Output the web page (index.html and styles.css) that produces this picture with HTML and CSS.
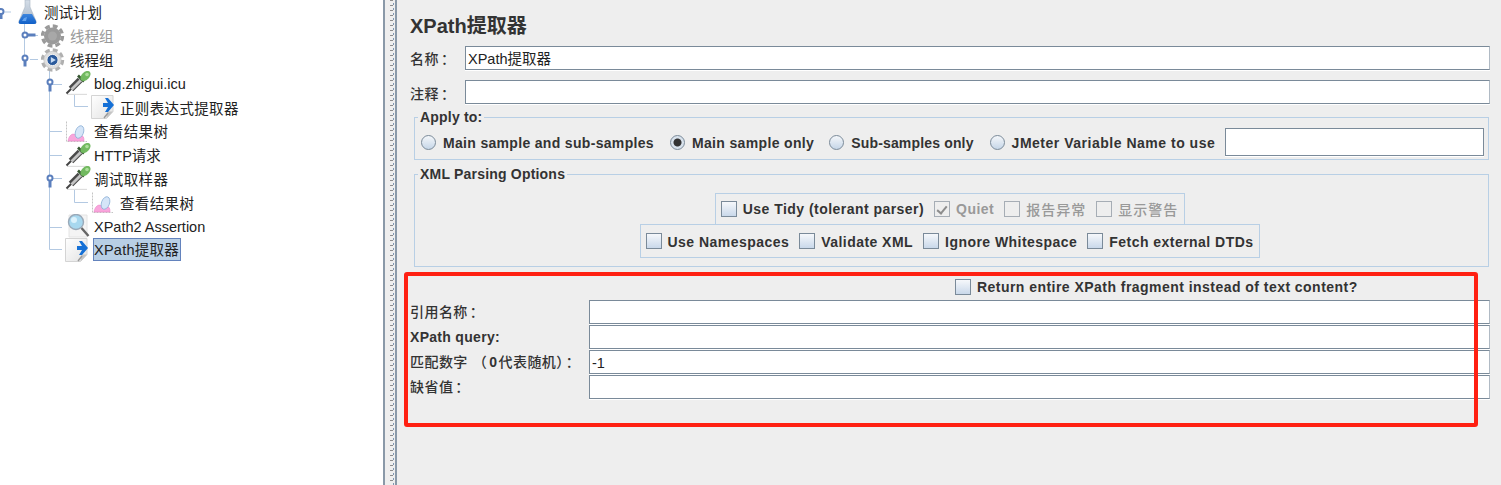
FILE: index.html
```html
<!DOCTYPE html>
<html lang="zh">
<head>
<meta charset="utf-8">
<title>XPath提取器</title>
<link rel="stylesheet" href="styles.css">
</head>
<body>
<svg class="defs" width="0" height="0" aria-hidden="true">
  <defs>
    <linearGradient id="pageFill" x1="0" y1="0" x2="1" y2="1"><stop offset="0" stop-color="#ffffff"/><stop offset="1" stop-color="#e2e2e2"/></linearGradient>
    <linearGradient id="glass" x1="0" y1="0" x2="0" y2="1"><stop offset="0" stop-color="#d5dee8"/><stop offset="1" stop-color="#a4b3c4"/></linearGradient>
    <linearGradient id="liquid" x1="0" y1="0" x2="0" y2="1"><stop offset="0" stop-color="#3f86dd"/><stop offset="1" stop-color="#0f5fc8"/></linearGradient>
    <symbol id="flask" viewBox="0 0 28 24">
      <path d="M10 0h5v7l6 14q1 3-2 3H6q-3 0-2-3l6-14z" fill="url(#glass)" stroke="#a9b5c2" stroke-width=".6"/>
      <path d="M8 14h9l4 7q1 3-2 3H6q-3 0-2-3z" fill="url(#liquid)"/>
      <path d="M7 21h4l1-4-3 1z" fill="#63a3ee"/>
    </symbol>
    <symbol id="gearOff" viewBox="0 0 28 24">
      <circle cx="11.5" cy="12" r="8.5" fill="#9a9a9a"/>
      <circle cx="11.5" cy="12" r="10" fill="none" stroke="#9a9a9a" stroke-width="3.4" stroke-dasharray="4.8 3.05"/>
      <circle cx="11.5" cy="12" r="4.5" fill="#a8a8a8"/>
    </symbol>
    <symbol id="gearOn" viewBox="0 0 28 24">
      <circle cx="11.5" cy="12" r="10" fill="none" stroke="#b0b0b0" stroke-width="3.4" stroke-dasharray="4.8 3.05"/>
      <circle cx="11.5" cy="12" r="8.7" fill="#dedede" stroke="#bbbbbb" stroke-width=".6"/>
      <circle cx="11.5" cy="12" r="5.6" fill="#2b5a9c" stroke="#f4f4f4" stroke-width="1"/>
      <path d="M9.8 9l5 3-5 3z" fill="#c8dcf4"/>
    </symbol>
    <symbol id="dropper" viewBox="0 0 28 24">
      <path d="M2 23.5h20" stroke="#dddddd" stroke-width="1.4"/>
      <path d="M1.5 22.5l5-5" stroke="#444444" stroke-width="2"/>
      <path d="M6 18l9-9" stroke="#4a4a4a" stroke-width="6.4"/>
      <path d="M6.500 18.500l9-9" stroke="#c4c4c4" stroke-width="2.800"/>
      <path d="M13 4.500l6 6" stroke="#35552f" stroke-width="2.600"/>
      <ellipse cx="20.500" cy="5" rx="3.800" ry="6" transform="rotate(45 20.500 5)" fill="#72b960"/>
      <circle cx="22" cy="3.500" r="1.800" fill="#addf9b"/>
    </symbol>
    <symbol id="docArrow" viewBox="0 0 28 24">
      <path d="M.5 .5h21.500v16l-6.500 7H.5z" fill="url(#pageFill)" stroke="#d4d4d4"/>
      <path d="M15.500 23.500l1-7h5.500z" fill="#c4c4c4"/>
      <path d="M12 8h5l-3-5h3l6 7-6 7h-3l3-5h-5z" fill="#1570d6"/>
      <path d="M13 23l4-5" stroke="#999999" stroke-width="1.400"/>
    </symbol>
    <symbol id="chart" viewBox="0 0 28 24">
      <path d="M1.500 2.500V22.500H22" fill="none" stroke="#c4c4c4" stroke-dasharray="2 1"/>
      <path d="M3 22q1-6 5-7 3 0 4 3 2 2 4-1 3-1 3 5z" fill="#f9a6dc" stroke="#ea86c8" stroke-width=".6"/>
      <ellipse cx="14.500" cy="13" rx="4" ry="6.500" transform="rotate(20 14.500 13)" fill="#d5e5f8" stroke="#8fb2d8" stroke-width=".8"/>
    </symbol>
    <symbol id="magnifier" viewBox="0 0 28 24">
      <path d="M4 1h18v22H4z" fill="#f4f4f4" stroke="#e4e4e4"/>
      <path d="M16.500 14l7 8" stroke="#666666" stroke-width="2.400"/>
      <circle cx="11" cy="8" r="7.500" fill="#a8d8ef" stroke="#9aa9b8" stroke-width="1.400"/>
      <circle cx="9" cy="6" r="3" fill="#dcf2fc"/>
    </symbol>
  </defs>
</svg>

<div class="app">
  <nav class="tree">
    <svg class="guides" width="120" height="262" viewBox="0 0 120 262" aria-hidden="true">
      <g class="guide-lines">
        <path d="M4.500 12H11M24.500 12V59M30 35.500H38M30 59.500H38"/>
        <path d="M49.500 70V249.500M49.500 84.500H62M49.500 131.500H62M49.500 155.500H62M49.500 178.500H62M49.500 227.500H62M49.500 249.500H62"/>
        <path d="M74.500 94V106.500H88M74.500 190V202.500H88"/>
      </g>
      <g class="handles">
        <path class="stem" d="M1 14v5"/><circle cx="1" cy="11.500" r="2.500"/>
        <path class="stem" d="M27.500 35h8"/><circle cx="25" cy="35" r="2.500"/>
        <path class="stem" d="M25 60.500v6"/><circle cx="25" cy="58" r="2.500"/>
        <path class="stem" d="M50 84.500v7"/><circle cx="50" cy="82" r="2.500"/>
        <path class="stem" d="M50 180.500v7"/><circle cx="50" cy="178" r="2.500"/>
      </g>
    </svg>
    <div class="row l0"><svg class="ic"><use href="#flask"/></svg><span>测试计划</span></div>
    <div class="row l1 off"><svg class="ic"><use href="#gearOff"/></svg><span>线程组</span></div>
    <div class="row l1"><svg class="ic"><use href="#gearOn"/></svg><span>线程组</span></div>
    <div class="row l2 lat"><svg class="ic"><use href="#dropper"/></svg><span>blog.zhigui.icu</span></div>
    <div class="row l3 zh"><svg class="ic"><use href="#docArrow"/></svg><span>正则表达式提取器</span></div>
    <div class="row l2 zh"><svg class="ic"><use href="#chart"/></svg><span>查看结果树</span></div>
    <div class="row l2"><svg class="ic"><use href="#dropper"/></svg><span>HTTP请求</span></div>
    <div class="row l2 zh"><svg class="ic"><use href="#dropper"/></svg><span>调试取样器</span></div>
    <div class="row l3 zh"><svg class="ic"><use href="#chart"/></svg><span>查看结果树</span></div>
    <div class="row l2 lat"><svg class="ic"><use href="#magnifier"/></svg><span>XPath2 Assertion</span></div>
    <div class="row l2"><svg class="ic"><use href="#docArrow"/></svg><span class="selected">XPath提取器</span></div>
  </nav>

  <div class="divider"></div>

  <main class="panel">
    <h1 class="title">XPath提取器</h1>
    <div class="name-row"><label class="cjk-label">名称<span class="colon">：</span></label><div class="field"><span>XPath提取器</span></div></div>
    <div class="name-row second"><label class="cjk-label">注释<span class="colon">：</span></label><div class="field"></div></div>

    <fieldset class="group apply">
      <legend>Apply to:</legend>
      <div class="radios">
        <div class="opt"><i class="radio"></i><span>Main sample and sub-samples</span></div>
        <div class="opt"><i class="radio on"></i><span>Main sample only</span></div>
        <div class="opt"><i class="radio"></i><span>Sub-samples only</span></div>
        <div class="opt"><i class="radio"></i><span>JMeter Variable Name to use</span></div>
        <div class="field var"></div>
      </div>
    </fieldset>

    <fieldset class="group xml">
      <legend>XML Parsing Options</legend>
      <div class="box-stack">
        <div class="box">
          <div class="chk"><i class="cb"></i><span>Use Tidy (tolerant parser)</span></div>
          <div class="chk dis"><i class="cb checked"></i><span>Quiet</span></div>
          <div class="chk dis"><i class="cb"></i><span class="cjk">报告异常</span></div>
          <div class="chk dis"><i class="cb"></i><span class="cjk">显示警告</span></div>
        </div>
        <div class="box">
          <div class="chk"><i class="cb"></i><span>Use Namespaces</span></div>
          <div class="chk"><i class="cb"></i><span>Validate XML</span></div>
          <div class="chk"><i class="cb"></i><span>Ignore Whitespace</span></div>
          <div class="chk"><i class="cb"></i><span>Fetch external DTDs</span></div>
        </div>
      </div>
    </fieldset>

    <div class="return-row"><div class="chk"><i class="cb"></i><span>Return entire XPath fragment instead of text content?</span></div></div>
    <div class="form-grid">
      <label class="cjk-label">引用名称<span class="colon">：</span></label><div class="field"></div>
      <label class="bold-label">XPath query:</label><div class="field"></div>
      <label class="cjk-label">匹配数字<span class="paren">（</span><b>0</b>代表随机）<span class="colon">：</span></label><div class="field"><span>-1</span></div>
      <label class="cjk-label">缺省值<span class="colon">：</span></label><div class="field"></div>
    </div>
    <div class="annotation"></div>
  </main>
</div>
</body>
</html>
```

FILE: styles.css
```css
* { box-sizing: border-box; }
html, body { margin: 0; height: 100%; overflow: hidden; }
body { font-family: "Liberation Sans", "Noto Sans CJK SC", sans-serif; color: #333; background: #eee; }
.defs { position: absolute; }
.app { display: flex; height: 485px; }

.tree { position: relative; flex: 0 0 383px; background: #fff; font-size: 14.5px; color: #222; }
.guides { position: absolute; left: 0; top: 0; }
.guide-lines path { fill: none; stroke: #b3c9e2; stroke-width: 1; }
.handles circle { fill: #fff; stroke: #5b7fbd; stroke-width: 2; }
.handles .stem { fill: none; stroke: #5b7fbd; stroke-width: 3; }
.row { position: relative; display: flex; align-items: center; height: 23.8px; white-space: nowrap; }
.row .ic { flex: 0 0 28px; width: 28px; height: 24px; margin-right: 1px; overflow: visible; }
.l0 { padding-left: 15px; }
.l1 { padding-left: 41px; }
.l2 { padding-left: 65px; }
.l3 { padding-left: 91px; }
.zh { letter-spacing: .35px; }
.lat span { padding-top: 2px; }
.off { color: #999; }
.selected { margin-left: -1px; padding: 0 1px 0 0; height: 23px; line-height: 22px; letter-spacing: .25px; background: #b8cfe5; border: 1px solid #6383bd; }

.divider {
  flex: 0 0 14px;
  border-left: 2px solid #8a99a8;
  border-right: 2px solid #8a99a8;
  background:
    repeating-linear-gradient(to bottom, #8c8c8c 0 1px, transparent 1px 5px) 5px 0 / 3px 100% no-repeat,
    repeating-linear-gradient(to bottom, #7f97b2 0 2px, transparent 2px 5px) 8px 3px / 1px 100% no-repeat,
    #eee;
}

.panel { position: relative; flex: 1; min-width: 0; padding: 0 11px 0 13px; background: #eee; font-size: 14px; }
.title { margin: 0; height: 46px; padding-top: 14px; font-size: 20px; line-height: 24px; font-weight: 700; color: #333; }
.name-row { display: flex; align-items: center; height: 24px; }
.name-row.second { margin-top: 10px; }
.name-row .cjk-label { flex: 0 0 55px; padding-top: 2px; }
.name-row.second .cjk-label { padding-top: 4px; }
.cjk-label { font-size: 14px; letter-spacing: .45px; font-weight: 500; white-space: nowrap; line-height: 23px; }
.cjk-label b { margin: 0 1px 0 2px; font-family: "Liberation Sans", sans-serif; }
.paren { margin-left: 5px; }
.colon { margin-left: 2px; font-family: "Noto Sans CJK TC", sans-serif; }
.bold-label { font-weight: 700; line-height: 24px; white-space: nowrap; letter-spacing: .3px; }

.field { flex: 1; height: 24px; min-width: 0; background: #fff; border: 1px solid #7a8a99; border-right-color: #b0bac4; padding-left: 2px; font-size: 14.5px; line-height: 24px; color: #222; box-shadow: 0 1px 0 #fff; white-space: nowrap; }
.field.var { flex: 0 0 259px; height: 28px; margin-left: 10px; border-right-color: #7a8a99; }

.group { margin: 0 1px 0 4px; padding: 0; min-width: 0; border: 1px solid #b8cfe5; }
.group legend { margin-left: 3px; padding: 0 2px; font-size: 14px; font-weight: 700; line-height: 16px; letter-spacing: .2px; }
.apply { margin-top: 5px; padding: 3px 4px 3px 0; }
.radios { display: flex; align-items: center; padding-left: 6px; }
.opt { display: flex; align-items: center; gap: 7px; margin-right: 16px; font-weight: 700; white-space: nowrap; letter-spacing: .32px; }
.opt span { padding-top: 1px; }
.opt:nth-child(2) { letter-spacing: .35px; margin-right: 15px; }
.opt:nth-child(3) { letter-spacing: .16px; }
.opt:nth-child(4) { letter-spacing: .51px; margin-right: 0; }
.radio { flex: none; width: 15px; height: 15px; border-radius: 50%; border: 1px solid #7a8a99; background: linear-gradient(#f4f7fa, #c6d6e8); }
.radio.on { background: radial-gradient(circle, #333 0 3.500px, #d8e2ec 4.500px); }

.xml { margin-top: 6px; padding: 11px 3px 8px 0; }
.box-stack { display: flex; flex-direction: column; align-items: center; }
.box { display: flex; align-items: center; gap: 10px; height: 32px; padding: 0 6px 0 5px; border: 1px solid #b8cfe5; white-space: nowrap; }
.box + .box { height: 34px; margin-top: -1px; }
.box + .box span { padding-top: 1px; }
.chk { display: flex; align-items: center; gap: 6px; font-weight: 700; letter-spacing: .46px; white-space: nowrap; }
.cb { position: relative; flex: none; width: 16px; height: 16px; border: 1px solid #7a8a99; background: linear-gradient(#f6f8fb, #c9d8ea); }
.dis { color: #999; }
.dis .cb { border-color: #a6adb5; background: #eee; }
.cb.checked::after { content: ""; position: absolute; left: 4px; top: 2px; width: 4px; height: 8px; border: solid #8d8d8d; border-width: 0 2px 2px 0; transform: rotate(40deg); }
.cjk { font-weight: 500; letter-spacing: 1px; }

.return-row { display: flex; align-items: center; height: 24px; margin-top: 8px; padding-left: 545px; margin-bottom: 1px; }
.form-grid { display: grid; grid-template-columns: 179px 1fr; grid-auto-rows: 24px; row-gap: 1px; }

.annotation { position: absolute; left: 7px; top: 272px; width: 1074px; height: 155px; border: 4px solid #ff2012; border-radius: 3px; pointer-events: none; }
```
